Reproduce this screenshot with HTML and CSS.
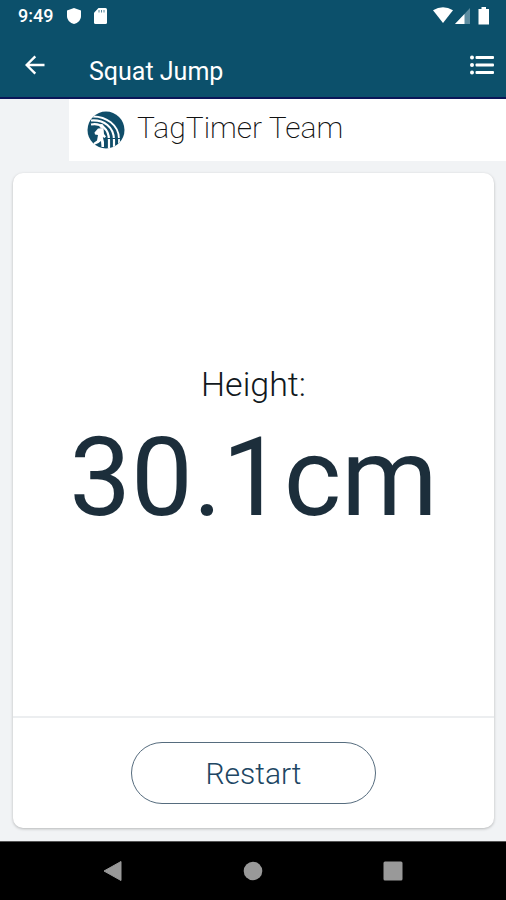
FILE: index.html
```html
<!DOCTYPE html>
<html lang="en">
<head>
<meta charset="utf-8">
<meta name="viewport" content="width=device-width, initial-scale=1">
<title>Squat Jump</title>
<link rel="stylesheet" href="styles.css">
</head>
<body>
<header class="top">
  <div class="status">
    <span class="clock">9:49</span>
    <svg class="status-icon shield" width="14" height="16" viewBox="0 0 14 16" aria-hidden="true"><path d="M7 0 L14 2.6 V8 C14 12 11 15 7 16 C3 15 0 12 0 8 V2.6 Z" fill="#fff"/></svg>
    <svg class="status-icon" width="13" height="16" viewBox="0 0 13 16" aria-hidden="true"><path d="M4.5 0 H11.5 Q13 0 13 1.5 V14.5 Q13 16 11.5 16 H1.5 Q0 16 0 14.5 V4.8 Z" fill="#fff"/><path d="M5 2v2.500M7.500 2v2.500M10 2v2.500" stroke="#0c506b" stroke-opacity=".7"/></svg>
    <svg class="signals" width="57" height="18" viewBox="0 0 57 18" aria-hidden="true">
      <path d="M0 3.2 Q10 -2.6 20 3.2 L10 16 Z" fill="#fff"/>
      <path d="M37 1 V17 H22 Z" fill="#5d8ca0"/>
      <path d="M31.5 7 V17 H22 Z" fill="#fff"/>
      <path d="M48.500 0 H53 V2 H56 V17.500 H45.500 V2 H48.500 Z" fill="#fff"/>
    </svg>
  </div>
  <div class="appbar">
    <button class="icon-button" aria-label="Back"><svg width="20" height="20" viewBox="0 0 20 20" aria-hidden="true"><path d="M19.500 10 H2 M10.300 1.300 L1.600 10 L10.300 18.700" fill="none" stroke="#fff" stroke-width="2.400"/></svg></button>
    <h1 class="title">Squat Jump</h1>
    <button class="icon-button" aria-label="List"><svg width="24" height="20" viewBox="0 0 24 20" aria-hidden="true"><g fill="#fff"><circle cx="2" cy="2.500" r="2"/><circle cx="2" cy="10" r="2"/><circle cx="2" cy="17.500" r="2"/><rect x="5.500" y="1" width="18.500" height="3" rx="1"/><rect x="5.500" y="8.500" width="18.500" height="3" rx="1"/><rect x="5.500" y="16" width="18.500" height="3" rx="1"/></g></svg></button>
  </div>
</header>
<div class="team">
  <svg width="38" height="38" viewBox="0 0 38 38" aria-hidden="true">
    <defs><clipPath id="disc"><circle cx="19" cy="19" r="18.500"/></clipPath></defs>
    <circle cx="19" cy="19" r="18.500" fill="#104d69"/>
    <g clip-path="url(#disc)" fill="none" stroke="#fff" stroke-width="2.200">
      <path d="M5 5.500 C19 5 32 14 32 28 V38" stroke-width="1.800"/>
      <path d="M4 9.500 C17 8.500 27 16 27 29 V38"/>
      <path d="M4 13.500 C14 11.500 22 18 22 29 V38"/>
      <path d="M16 27.500 H35" stroke="#104d69" stroke-width="1.200"/>
    </g>
    <g fill="#fff">
      <circle cx="14.500" cy="15" r="2.100"/>
      <path d="M11 17.500 L16.500 17 L17 23 L19 25.500 L17.500 27 L15.800 26 L17 31 V36 H14.500 L14 30 L11.500 32 L7 34 L6.500 32 L10 29.500 L11 24 L8 23.500 L7.500 21.500 Z"/>
    </g>
  </svg>
  <span>TagTimer Team</span>
</div>
<main class="card">
  <section class="result">
    <h2 class="label">Height:</h2>
    <p class="value">30.1cm</p>
  </section>
  <div class="actions"><button class="restart">Restart</button></div>
</main>
<nav class="system" aria-label="System">
  <button class="icon-button" aria-label="Back"><svg width="20" height="22" viewBox="0 0 20 22" aria-hidden="true"><path d="M18 1.500 V20.500 L1 11 Z" fill="#999" stroke="#999" stroke-linejoin="round"/></svg></button>
  <button class="icon-button" aria-label="Home"><svg width="20" height="20" viewBox="0 0 20 20" aria-hidden="true"><circle cx="10" cy="10" r="9.300" fill="#999"/></svg></button>
  <button class="icon-button" aria-label="Overview"><svg width="20" height="20" viewBox="0 0 20 20" aria-hidden="true"><rect x=".5" y=".5" width="19" height="19" rx="1.500" fill="#999"/></svg></button>
</nav>
</body>
</html>
```
FILE: styles.css
```css
* { box-sizing: border-box; }
body {
  margin: 0;
  min-height: 100vh;
  display: flex;
  flex-direction: column;
  background: #f1f3f5;
  font-family: Roboto, "Liberation Sans", sans-serif;
  color: #1c2e3b;
}
h1, h2, p { margin: 0; font-weight: 400; }
button { font: inherit; cursor: pointer; }
svg { display: block; flex: none; }
.top {
  background: #0c506b;
  border-bottom: 2px solid #0b1658;
  color: #fff;
}
.status {
  display: flex;
  align-items: center;
  height: 32px;
  padding: 0 16px 0 18px;
}
.clock { font-size: 18px; font-weight: 500; line-height: 32px; }
.shield { margin: 0 13px 0 14px; }
.signals { margin-left: auto; }
.appbar {
  display: flex;
  height: 65px;
  padding: 0 12px 0 25px;
}
.icon-button {
  display: flex;
  align-items: center;
  justify-content: center;
  padding: 0;
  border: 0;
  background: none;
}
.appbar .icon-button { height: 65px; }
.title {
  flex: 1;
  padding-left: 44px;
  padding-top: 14px;
  font-size: 25px;
  line-height: 51px;
}
.team {
  display: flex;
  align-items: center;
  gap: 12px;
  height: 62px;
  margin-left: 69px;
  padding-left: 18px;
  background: #fff;
  color: #111;
  font-size: 30px;
  font-weight: 200;
}
.team span { line-height: 36px; padding-bottom: 4px; }
.card {
  flex: 1;
  display: flex;
  flex-direction: column;
  margin: 12px 12px 13px 13px;
  border-radius: 10px;
  background: #fff;
  box-shadow: 0 1px 3px rgba(0, 0, 0, .25);
}
.result {
  flex: 1;
  display: flex;
  flex-direction: column;
  align-items: center;
  justify-content: center;
  gap: 4px;
  padding-top: 22px;
}
.label {
  color: #111820;
  font-size: 34px;
  font-weight: 300;
  line-height: 40px;
}
.value { font-size: 110px; line-height: 140px; }
.actions {
  display: flex;
  align-items: center;
  justify-content: center;
  height: 112px;
  border-top: 2px solid #eceef0;
}
.restart {
  width: 51%;
  height: 62px;
  border: 1px solid #566c7e;
  border-radius: 31px;
  background: #fff;
  color: #204663;
  font-size: 30px;
  font-weight: 300;
}
.system {
  display: flex;
  justify-content: center;
  gap: 120px;
  height: 59px;
  border-top: 1px solid #555;
  background: #000;
}
```
